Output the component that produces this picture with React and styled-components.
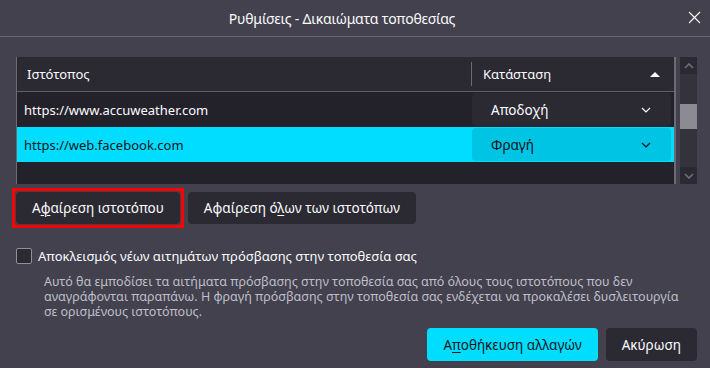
import React from 'react'
import styled, {createGlobalStyle} from 'styled-components'

const GlobalStyle = createGlobalStyle`
  html, body {
    margin: 0;
    padding: 0;
    background: #42414d;
  }
  * {
    box-sizing: border-box;
  }
`

const Dialog = styled.div`
  width: 710px;
  height: 368px;
  background: #42414d;
  color: #fbfbfe;
  font-family: "Noto Sans", "DejaVu Sans", sans-serif;
  font-size: 13px;
  display: flex;
  flex-direction: column;
  position: relative;
  overflow: hidden;
`

const TitleBar = styled.div`
  height: 37px;
  border-bottom: 1px solid #6b6a75;
  display: flex;
  align-items: center;
  justify-content: center;
  position: relative;
  padding-right: 26px;
`

const Title = styled.div`
  font-size: 14px;
  letter-spacing: -0.2px;
`

const CloseButton = styled.div`
  position: absolute;
  right: 9px;
  top: 10px;
  width: 13px;
  height: 13px;
`

const Content = styled.div`
  flex: 1;
  display: flex;
  flex-direction: column;
  padding: 20px 13px 0 16px;
`

const TableArea = styled.div`
  display: flex;
  height: 127px;
  gap: 4px;
`

const Table = styled.div`
  width: 660px;
  display: flex;
  flex-direction: column;
  background: #23222b;
  border-left: 1px solid #6b6a75;
  border-right: 2px solid #6b6a75;
`

const HeaderRow = styled.div`
  height: 35px;
  display: flex;
  align-items: center;
  background: #2b2a33;
  border-bottom: 1px solid #5f5e68;
`

const HeaderCell = styled.div`
  flex: ${p => (p.$grow ? 1 : 'none')};
  width: ${p => p.$width || 'auto'};
  height: 100%;
  display: flex;
  align-items: center;
  justify-content: space-between;
  padding: 0 14px 0 ${p => p.$pad || 10}px;
  position: relative;

  ${p => p.$divider && `
    &::before {
      content: '';
      position: absolute;
      left: 0;
      top: 5px;
      bottom: 5px;
      width: 1px;
      background: #6b6a75;
    }
  `}
`

const Row = styled.div`
  height: 35px;
  display: flex;
  align-items: center;
  background: ${p => (p.$selected ? '#00ddff' : '#23222b')};
  color: ${p => (p.$selected ? '#15141a' : '#fbfbfe')};
`

const UrlCell = styled.div`
  flex: 1;
  padding-left: 7px;
`

const Select = styled.div`
  width: 199px;
  height: 33px;
  margin-right: 3px;
  border-radius: 4px;
  display: flex;
  align-items: center;
  justify-content: space-between;
  padding: 0 20px 0 19px;
  background: ${p => (p.$selected ? '#00c4e3' : '#2b2a33')};
  font-size: 13.5px;
`

const Filler = styled.div`
  flex: 1;
`

const Scrollbar = styled.div`
  width: 17px;
  display: flex;
  flex-direction: column;
  background: #34333c;
`

const ScrollArrow = styled.div`
  height: 17px;
  background: #2b2a33;
  display: flex;
  align-items: center;
  justify-content: center;
`

const Thumb = styled.div`
  height: 25px;
  margin-top: 30px;
  background: #8c8b93;
`

const ButtonRow = styled.div`
  display: flex;
  align-items: center;
  gap: 4px;
  margin-top: 4px;
  margin-left: -4px;
`

const Highlight = styled.div`
  border: 3px solid #ff0000;
  padding: 1px;
  display: flex;
`

const Button = styled.button`
  height: ${p => p.$height || 32}px;
  padding: 0 ${p => p.$pad || 16}px;
  border: none;
  border-radius: 4px;
  font-family: inherit;
  font-size: 13.5px;
  background: ${p => (p.$primary ? '#00ddff' : '#2b2a33')};
  color: ${p => (p.$primary ? '#15141a' : '#fbfbfe')};

  u {
    text-decoration-thickness: 1px;
    text-underline-offset: 2px;
  }
`

const CheckRow = styled.label`
  display: flex;
  align-items: center;
  gap: 6px;
  margin-top: 19px;
`

const Checkbox = styled.span`
  width: 16px;
  height: 16px;
  border: 1px solid #8f8f9d;
  border-radius: 2px;
  background: #2b2a33;
`

const Description = styled.p`
  margin: 9px 0 0 28px;
  font-size: 12.5px;
  line-height: 15px;
  color: #bfbfc9;
  width: 640px;
`

const Footer = styled.div`
  display: flex;
  justify-content: flex-end;
  gap: 8px;
  margin-top: 9px;
`

const Grip = styled.div`
  position: absolute;
  right: 0;
  bottom: 0;
  width: 7px;
  height: 7px;
`

const Chevron = ({color}) => (
  <svg width="10" height="6" viewBox="0 0 10 6">
    <polyline points="1,1 5,5 9,1" fill="none" stroke={color} strokeWidth="1.2" />
  </svg>
)

const App = () => {
  return (
    <>
      <GlobalStyle />
      <Dialog>
        <TitleBar>
          <Title>Ρυθμίσεις - Δικαιώματα τοποθεσίας</Title>
          <CloseButton>
            <svg width="13" height="13" viewBox="0 0 13 13">
              <path d="M1 1L12 12M12 1L1 12" stroke="#fbfbfe" strokeWidth="1.1" />
            </svg>
          </CloseButton>
        </TitleBar>
        <Content>
          <TableArea>
            <Table>
              <HeaderRow>
                <HeaderCell $grow>Ιστότοπος</HeaderCell>
                <HeaderCell $width="203px" $pad={12} $divider>
                  Κατάσταση
                  <svg width="10" height="6" viewBox="0 0 10 6">
                    <polygon points="0,6 5,1 10,6" fill="#fbfbfe" />
                  </svg>
                </HeaderCell>
              </HeaderRow>
              <Row>
                <UrlCell>https://www.accuweather.com</UrlCell>
                <Select>
                  Αποδοχή
                  <Chevron color="#fbfbfe" />
                </Select>
              </Row>
              <Row $selected>
                <UrlCell>https://web.facebook.com</UrlCell>
                <Select $selected>
                  Φραγή
                  <Chevron color="#15141a" />
                </Select>
              </Row>
              <Filler />
            </Table>
            <Scrollbar>
              <ScrollArrow>
                <svg width="10" height="6" viewBox="0 0 10 6">
                  <polyline points="1,5 5,1 9,5" fill="none" stroke="#6f6e78" strokeWidth="1.6" />
                </svg>
              </ScrollArrow>
              <Thumb />
              <Filler />
              <ScrollArrow>
                <svg width="10" height="6" viewBox="0 0 10 6">
                  <polyline points="1,1 5,5 9,1" fill="none" stroke="#6f6e78" strokeWidth="1.6" />
                </svg>
              </ScrollArrow>
            </Scrollbar>
          </TableArea>

          <ButtonRow>
            <Highlight>
              <Button>
                Α<u>φ</u>αίρεση ιστοτόπου
              </Button>
            </Highlight>
            <Button>
              Αφαίρεση ό<u>λ</u>ων των ιστοτόπων
            </Button>
          </ButtonRow>

          <CheckRow>
            <Checkbox />
            Αποκλεισμός νέων αιτημάτων πρόσβασης στην τοποθεσία σας
          </CheckRow>
          <Description>
            Αυτό θα εμποδίσει τα αιτήματα πρόσβασης στην τοποθεσία σας από όλους τους ιστοτόπους που δεν
            αναγράφονται παραπάνω. Η φραγή πρόσβασης στην τοποθεσία σας ενδέχεται να προκαλέσει δυσλειτουργία
            σε ορισμένους ιστοτόπους.
          </Description>

          <Footer>
            <Button $primary $height={33}>
              Α<u>π</u>οθήκευση αλλαγών
            </Button>
            <Button $height={33}>Ακύρωση</Button>
          </Footer>
        </Content>
        <Grip>
          <svg width="7" height="7" viewBox="0 0 7 7">
            <path d="M7 1L1 7M7 4L4 7" stroke="#8f8f9d" strokeWidth="1" />
          </svg>
        </Grip>
      </Dialog>
    </>
  )
}

export default App
